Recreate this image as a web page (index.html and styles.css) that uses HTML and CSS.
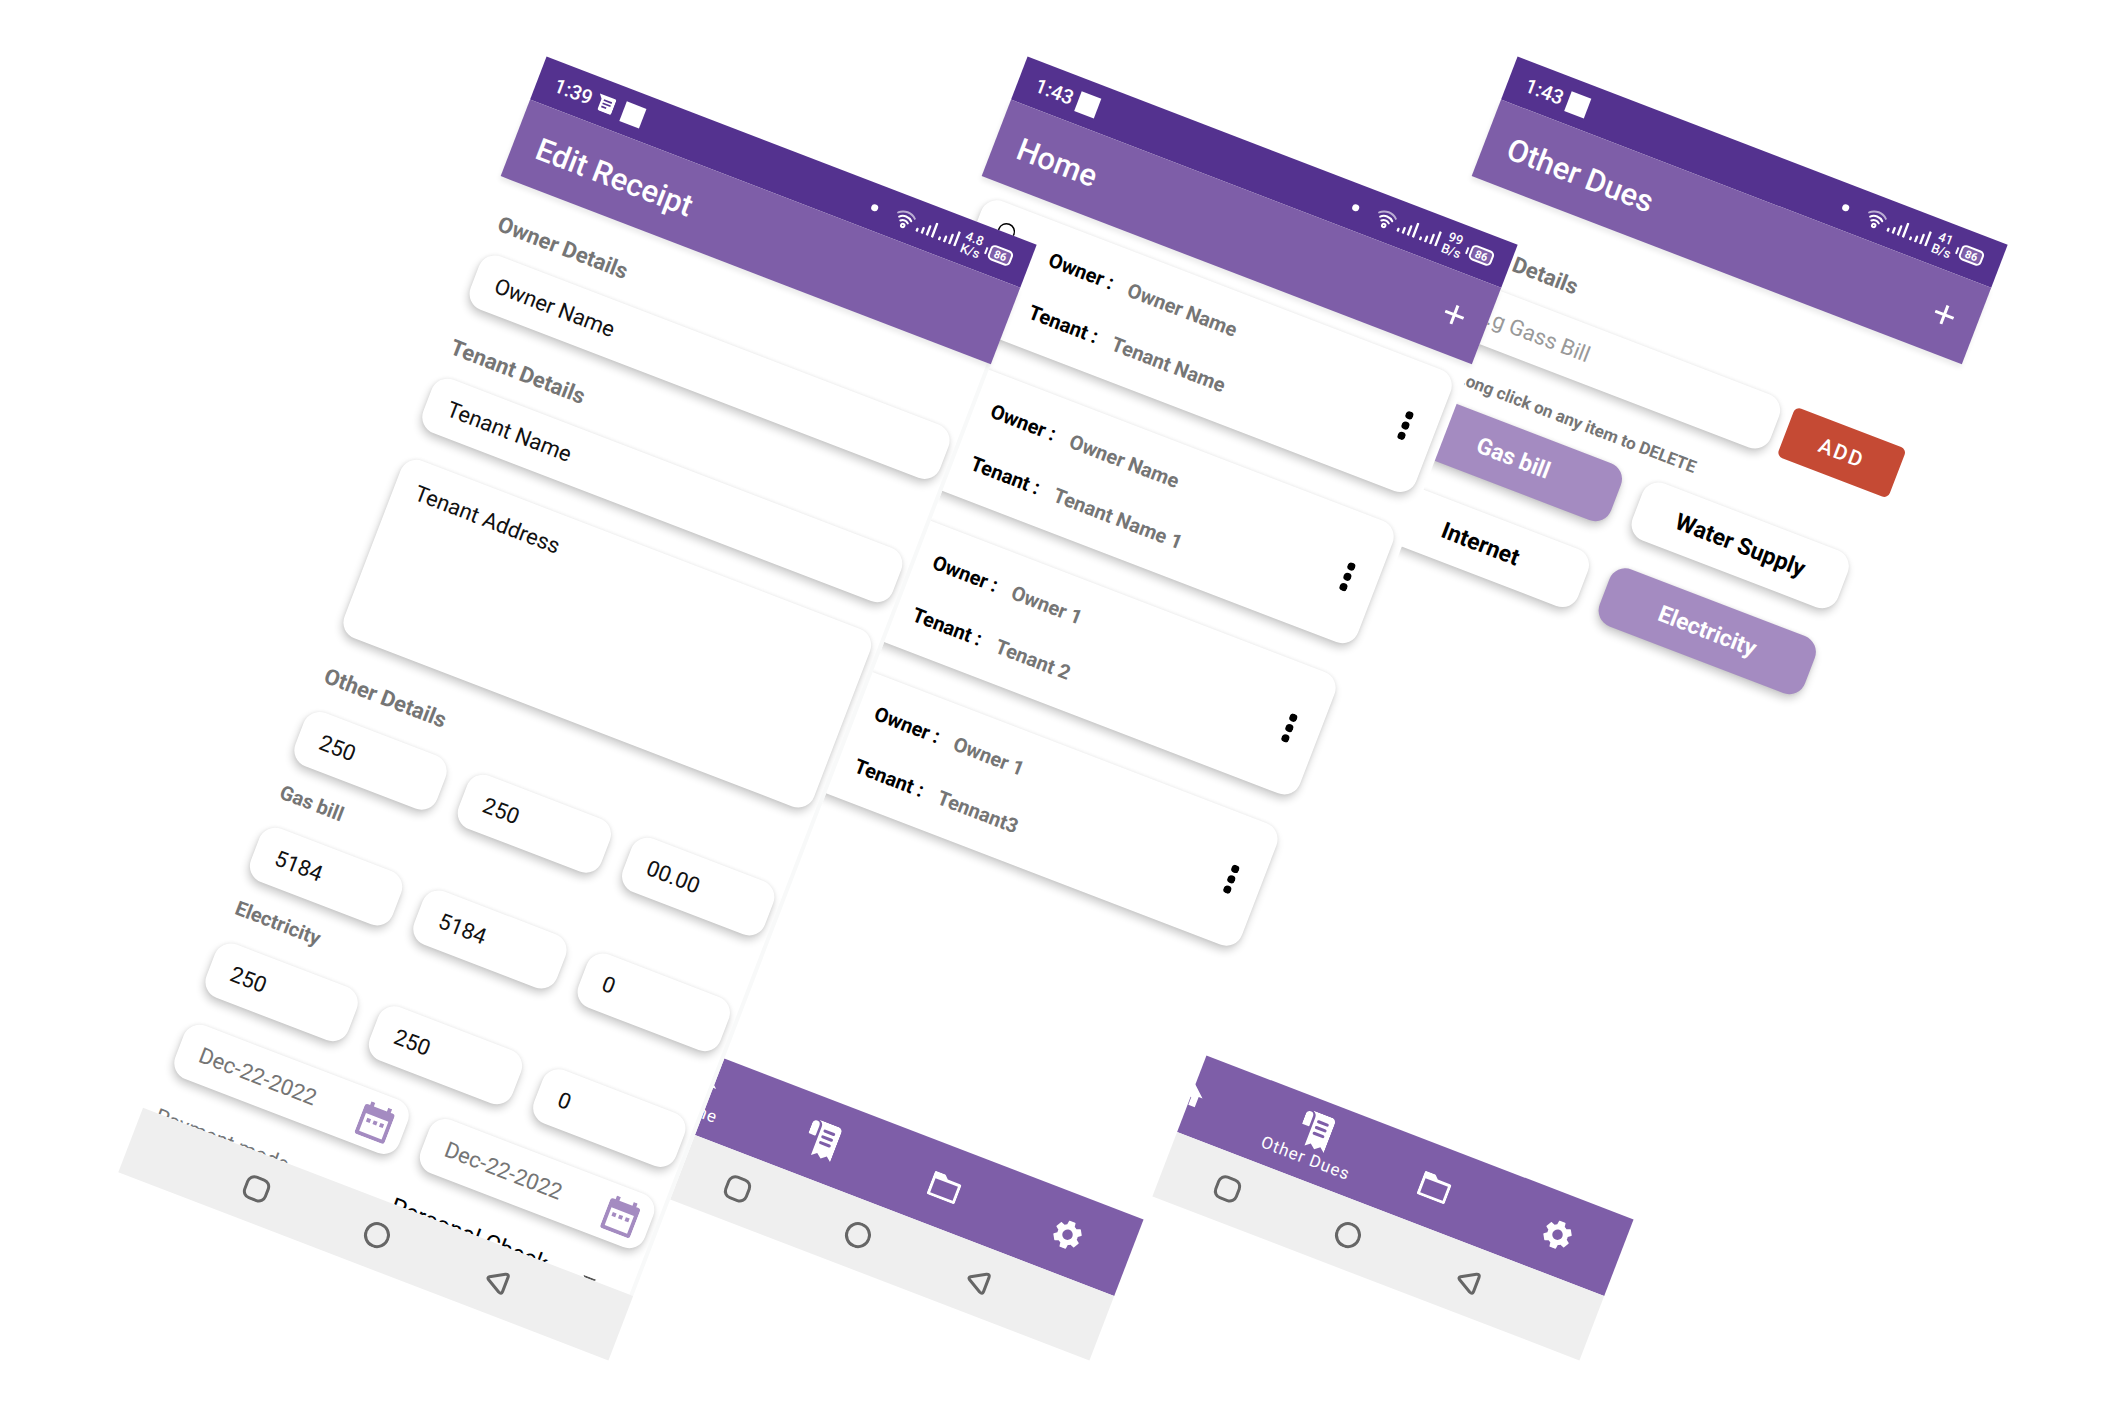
FILE: index.html
```html
<!DOCTYPE html>
<html lang="en">
<head>
  <title>Rent Receipt App</title>
  <meta charset="UTF-8">
  <meta name="viewport" content="width=device-width, initial-scale=1.0">
  <link rel="stylesheet" href="styles.css">
</head>
<body>
  <svg class="sprite" aria-hidden="true">
    <symbol id="wifi" viewBox="0 0 20 20">
      <g fill="none" stroke="#fff" stroke-width="2" stroke-linecap="round">
        <path d="M1 6.500a13 13 0 0 1 18 0" opacity=".6"/>
        <path d="M3.500 10a9.500 9.500 0 0 1 13 0"/>
        <path d="M6 13.200a6 6 0 0 1 8 0"/>
        <circle cx="10" cy="17" r="1.700"/>
      </g>
    </symbol>
    <symbol id="signal" viewBox="0 0 20 16">
      <path d="M1.500 15v-2M7 15V10M12.500 15V6M18 15V1" stroke="#fff" stroke-width="2.400" stroke-linecap="round"/>
    </symbol>
    <symbol id="plus" viewBox="0 0 20 20">
      <path d="M10 0v20M0 10h20" stroke="#fff" stroke-width="3"/>
    </symbol>
    <symbol id="calendar" viewBox="0 0 32 36">
      <path fill="#a48bc1" fill-rule="evenodd" d="M5 0h4v4h14V0h4v4h2a3 3 0 0 1 3 3v26a3 3 0 0 1-3 3H3a3 3 0 0 1-3-3V7a3 3 0 0 1 3-3h2zM4 13v19h24V13z"/>
      <path fill="#a48bc1" d="M7 17h4v4H7zM14 17h4v4h-4zM21 17h4v4h-4z"/>
    </symbol>
    <symbol id="home" viewBox="0 0 24 24">
      <path fill="#fff" d="M10 20v-6h4v6h5v-8h3L12 3 2 12h3v8z"/>
    </symbol>
    <symbol id="receipt" viewBox="0 0 30 36">
      <path fill="#fff" d="M6 0h19a5 5 0 0 1 5 5v30l-5-4-5 4-5-4-5 4V6c0-3-1-4-4-6z"/>
      <path fill="#fff" d="M0 15V5a4 4 0 0 1 6-3c1 1 1.500 2 1.500 4v9q0 1-1 1H1q-1 0-1-1z"/>
      <path d="M14.500 8.500h9M14.500 14.500h9M14.500 20.500h9" stroke="#7e5ea8" stroke-width="3" stroke-linecap="round"/>
    </symbol>
    <symbol id="folder" viewBox="0 0 30 25">
      <path fill="#fff" fill-rule="evenodd" d="M2 0h9l4 4h13a2 2 0 0 1 2 2v17a2 2 0 0 1-2 2H2a2 2 0 0 1-2-2V2a2 2 0 0 1 2-2zM3 7v15h24V7z"/>
    </symbol>
    <symbol id="gear" viewBox="2 2 20 20">
      <path fill="#fff" d="M19.140 12.940c.04-.3.06-.61.06-.94 0-.32-.02-.64-.07-.94l2.030-1.580c.18-.14.23-.41.12-.61l-1.920-3.320c-.12-.22-.37-.29-.59-.22l-2.390.96c-.5-.38-1.030-.7-1.620-.94l-.36-2.540c-.04-.24-.24-.41-.48-.41h-3.840c-.24 0-.43.17-.47.41l-.36 2.540c-.59.24-1.130.57-1.620.94l-2.390-.96c-.22-.08-.47 0-.59.22L2.740 8.870c-.12.21-.08.47.12.61l2.030 1.580c-.05.3-.09.63-.09.94s.02.64.07.94l-2.030 1.580c-.18.14-.23.41-.12.61l1.920 3.320c.12.22.37.29.59.22l2.390-.96c.5.38 1.030.7 1.620.94l.36 2.540c.05.24.24.41.48.41h3.840c.24 0 .44-.17.47-.41l.36-2.540c.59-.24 1.130-.56 1.620-.94l2.390.96c.22.08.47 0 .59-.22l1.920-3.320c.12-.22.07-.47-.12-.61l-2.010-1.580zM12 15.600c-1.980 0-3.600-1.620-3.600-3.600s1.620-3.600 3.600-3.600 3.600 1.620 3.600 3.600-1.620 3.600-3.600 3.600z"/>
    </symbol>
    <symbol id="person" viewBox="0 0 48 96">
      <g fill="none" stroke="#000" stroke-width="1.500">
        <circle cx="24" cy="10" r="8"/>
        <path d="M8 44V32q0-9 9-9h14q9 0 9 9v12z"/>
      </g>
    </symbol>
    <symbol id="more" viewBox="0 0 8 30">
      <circle cx="4" cy="4" r="4"/><circle cx="4" cy="15" r="4"/><circle cx="4" cy="26" r="4"/>
    </symbol>
    <symbol id="recents" viewBox="0 0 26 26">
      <rect x="2" y="2" width="22" height="22" rx="7" fill="none" stroke="#666" stroke-width="3"/>
    </symbol>
    <symbol id="circle" viewBox="0 0 26 26">
      <circle cx="13" cy="13" r="11.500" fill="none" stroke="#666" stroke-width="3"/>
    </symbol>
    <symbol id="back" viewBox="0 0 26 26">
      <path d="M4 11.500L18 3.500q3.500-1.500 3.500 2v15q0 3.500-3.500 2L4 14.500q-2-1.500 0-3z" fill="none" stroke="#666" stroke-width="3" stroke-linejoin="round"/>
    </symbol>
  </svg>

  <main class="showcase">

    <!-- Edit receipt -->
    <section class="phone phone-receipt">
      <div class="status-bar">
        <span class="time">1:39</span>
        <svg class="message-icon" viewBox="0 0 21 20">
          <path fill="#fff" d="M0 1h19q2 0 2 2v15q0 2-2 2H6q-2 0-2-2V6z"/>
          <path d="M7 6.500h10M7 10.500h10M7 14.500h6" stroke="#54328f" stroke-width="2"/>
        </svg>
        <span class="square"></span>
        <span class="dot"></span>
        <svg class="wifi"><use href="#wifi"/></svg>
        <svg class="signal"><use href="#signal"/></svg>
        <svg class="signal"><use href="#signal"/></svg>
        <span class="speed">4.8<br>K/s</span>
        <span class="battery">86</span>
      </div>
      <header class="app-bar">
        <h1>Edit Receipt</h1>
      </header>
      <form class="content receipt-form">
        <label class="section-label" for="owner-name">Owner Details</label>
        <input class="field" type="text" id="owner-name" value="Owner Name">
        <label class="section-label" for="tenant-name">Tenant Details</label>
        <input class="field" type="text" id="tenant-name" value="Tenant Name">
        <textarea class="field address" aria-label="Tenant address">Tenant Address</textarea>
        <label class="section-label" for="rent">Other Details</label>
        <div class="amounts">
          <input class="field" type="text" id="rent" value="250">
          <input class="field" type="text" aria-label="Rent paid" value="250">
          <input class="field" type="text" aria-label="Rent balance" value="00.00">
        </div>
        <label class="bill-label" for="gas">Gas bill</label>
        <div class="amounts">
          <input class="field" type="text" id="gas" value="5184">
          <input class="field" type="text" aria-label="Gas bill paid" value="5184">
          <input class="field" type="text" aria-label="Gas bill balance" value="0">
        </div>
        <label class="bill-label" for="electricity">Electricity</label>
        <div class="amounts">
          <input class="field" type="text" id="electricity" value="250">
          <input class="field" type="text" aria-label="Electricity paid" value="250">
          <input class="field" type="text" aria-label="Electricity balance" value="0">
        </div>
        <div class="dates">
          <button type="button" class="field date">Dec-22-2022 <svg><use href="#calendar"/></svg></button>
          <button type="button" class="field date">Dec-22-2022 <svg><use href="#calendar"/></svg></button>
        </div>
        <div class="payment">
          <label for="payment-mode">Payment mode</label>
          <div class="select">
            <select id="payment-mode"><option>Personal Check</option></select>
            <svg viewBox="0 0 14 8"><path d="M0 0h14L7 8z" fill="#555"/></svg>
          </div>
        </div>
      </form>
      <div class="system-nav">
        <button aria-label="Recents"><svg><use href="#recents"/></svg></button>
        <button aria-label="Home screen"><svg><use href="#circle"/></svg></button>
        <button aria-label="Back"><svg><use href="#back"/></svg></button>
      </div>
    </section>

    <!-- Home -->
    <section class="phone phone-home">
      <div class="status-bar">
        <span class="time">1:43</span>
        <span class="square"></span>
        <span class="dot"></span>
        <svg class="wifi"><use href="#wifi"/></svg>
        <svg class="signal"><use href="#signal"/></svg>
        <svg class="signal"><use href="#signal"/></svg>
        <span class="speed">99<br>B/s</span>
        <span class="battery">86</span>
      </div>
      <header class="app-bar">
        <h1>Home</h1>
        <button class="add-icon" aria-label="Add receipt"><svg><use href="#plus"/></svg></button>
      </header>
      <div class="content receipts">
        <article class="card">
          <svg class="person"><use href="#person"/></svg>
          <dl>
            <div><dt>Owner :</dt><dd>Owner Name</dd></div>
            <div><dt>Tenant :</dt><dd>Tenant Name</dd></div>
          </dl>
          <button class="more" aria-label="More"><svg><use href="#more"/></svg></button>
        </article>
        <article class="card">
          <svg class="person"><use href="#person"/></svg>
          <dl>
            <div><dt>Owner :</dt><dd>Owner Name</dd></div>
            <div><dt>Tenant :</dt><dd>Tenant Name 1</dd></div>
          </dl>
          <button class="more" aria-label="More"><svg><use href="#more"/></svg></button>
        </article>
        <article class="card">
          <svg class="person"><use href="#person"/></svg>
          <dl>
            <div><dt>Owner :</dt><dd>Owner 1</dd></div>
            <div><dt>Tenant :</dt><dd>Tenant 2</dd></div>
          </dl>
          <button class="more" aria-label="More"><svg><use href="#more"/></svg></button>
        </article>
        <article class="card">
          <svg class="person"><use href="#person"/></svg>
          <dl>
            <div><dt>Owner :</dt><dd>Owner 1</dd></div>
            <div><dt>Tenant :</dt><dd>Tennant3</dd></div>
          </dl>
          <button class="more" aria-label="More"><svg><use href="#more"/></svg></button>
        </article>
      </div>
      <nav class="tabs">
        <a href="#home-tab"><svg class="tab-home"><use href="#home"/></svg>Home</a>
        <a href="#dues-tab" aria-label="Other Dues"><svg class="tab-receipt"><use href="#receipt"/></svg></a>
        <a href="#files-tab" aria-label="Files"><svg class="tab-folder"><use href="#folder"/></svg></a>
        <a href="#settings-tab" aria-label="Settings"><svg class="tab-gear"><use href="#gear"/></svg></a>
      </nav>
      <div class="system-nav">
        <button aria-label="Recents"><svg><use href="#recents"/></svg></button>
        <button aria-label="Home screen"><svg><use href="#circle"/></svg></button>
        <button aria-label="Back"><svg><use href="#back"/></svg></button>
      </div>
    </section>

    <!-- Other dues -->
    <section class="phone phone-dues">
      <div class="status-bar">
        <span class="time">1:43</span>
        <span class="square"></span>
        <span class="dot"></span>
        <svg class="wifi"><use href="#wifi"/></svg>
        <svg class="signal"><use href="#signal"/></svg>
        <svg class="signal"><use href="#signal"/></svg>
        <span class="speed">41<br>B/s</span>
        <span class="battery">86</span>
      </div>
      <header class="app-bar">
        <h1>Other Dues</h1>
        <button class="add-icon" aria-label="Add due"><svg><use href="#plus"/></svg></button>
      </header>
      <div class="content dues">
        <label class="section-label" for="due-name">Dues Details</label>
        <div class="add-row">
          <input class="field" type="text" id="due-name" placeholder="e.g Gass Bill">
          <button class="add-button">ADD</button>
        </div>
        <p class="hint">Long click on any item to DELETE</p>
        <div class="chips">
          <button class="chip selected">Gas bill</button>
          <button class="chip">Water Supply</button>
          <button class="chip">Internet</button>
          <button class="chip selected">Electricity</button>
        </div>
      </div>
      <nav class="tabs">
        <a href="#home-tab" aria-label="Home"><svg class="tab-home"><use href="#home"/></svg></a>
        <a href="#dues-tab"><svg class="tab-receipt"><use href="#receipt"/></svg>Other Dues</a>
        <a href="#files-tab" aria-label="Files"><svg class="tab-folder"><use href="#folder"/></svg></a>
        <a href="#settings-tab" aria-label="Settings"><svg class="tab-gear"><use href="#gear"/></svg></a>
      </nav>
      <div class="system-nav">
        <button aria-label="Recents"><svg><use href="#recents"/></svg></button>
        <button aria-label="Home screen"><svg><use href="#circle"/></svg></button>
        <button aria-label="Back"><svg><use href="#back"/></svg></button>
      </div>
    </section>

  </main>
</body>
</html>
```

FILE: styles.css
```css
* {
  box-sizing: border-box;
}

body {
  margin: 0;
  background: #fff;
  font-family: Roboto, "Liberation Sans", sans-serif;
  color: #000;
}

h1, p, dl, dd {
  margin: 0;
}

button, input, textarea, select {
  font-family: inherit;
}

button {
  padding: 0;
  border: none;
  background: none;
  cursor: pointer;
}

svg {
  display: block;
  flex: none;
}

.sprite {
  display: none;
}

.showcase {
  display: flex;
  justify-content: center;
  align-items: center;
  min-height: 100vh;
  overflow: hidden;
}

/* phones */
.phone {
  display: flex;
  flex-direction: column;
  flex: none;
  position: relative;
  width: 525px;
  aspect-ratio: 525 / 1195;
  background: #fff;
  transform: rotate(21deg);
}

.phone-receipt {
  z-index: 3;
}

.phone-home {
  z-index: 2;
  margin-left: -44px;
}

.phone-dues {
  z-index: 1;
  margin-left: -35px;
}

.status-bar {
  display: flex;
  align-items: center;
  gap: 3px;
  flex: none;
  height: 46px;
  padding: 0 18px;
  background: #54328f;
  color: #fff;
}

.time {
  margin-right: 3px;
  font-size: 20px;
  font-weight: 500;
}

.message-icon {
  width: 18px;
  height: 18px;
  margin-right: 7px;
}

.square {
  width: 21px;
  height: 21px;
  background: #fff;
}

.dot {
  width: 7px;
  height: 7px;
  margin-left: auto;
  margin-right: 16px;
  border-radius: 50%;
  background: #fff;
}

.wifi {
  width: 20px;
  height: 20px;
}

.signal {
  width: 21px;
  height: 16px;
}

.speed {
  width: 22px;
  font-size: 13px;
  line-height: 13px;
  font-weight: 500;
  text-align: center;
}

.battery {
  display: flex;
  align-items: center;
  justify-content: center;
  width: 24px;
  height: 16px;
  margin-left: 4px;
  border: 2px solid #fff;
  border-radius: 5px;
  background: #7e5ea8;
  font-size: 11px;
  font-weight: 700;
  position: relative;
}

.battery::before {
  content: "";
  position: absolute;
  left: -6px;
  width: 2px;
  height: 7px;
  background: #fff;
}

.app-bar {
  display: flex;
  align-items: center;
  justify-content: space-between;
  flex: none;
  height: 82px;
  padding: 2px 24px 0;
  background: #7e5ea8;
  box-shadow: 0 4px 5px rgba(0, 0, 0, 0.08);
  color: #fff;
  position: relative;
}

.app-bar h1 {
  font-size: 31px;
  font-weight: 500;
}

.add-icon svg {
  width: 20px;
  height: 20px;
}

.content {
  flex: 1;
  min-height: 0;
  overflow: hidden;
}

.system-nav {
  display: flex;
  align-items: center;
  justify-content: space-around;
  flex: none;
  height: 69px;
  padding: 0 67px 0 70px;
  background: #efefef;
}

.system-nav svg {
  width: 26px;
  height: 26px;
}

.tabs {
  display: grid;
  grid-template-columns: repeat(4, 1fr);
  flex: none;
  height: 82px;
  background: #7e5ea8;
}

.tabs a {
  display: flex;
  flex-direction: column;
  align-items: center;
  justify-content: center;
  color: #fff;
  font-size: 17px;
  line-height: 20px;
  letter-spacing: 1px;
  text-decoration: none;
}

.tab-home {
  width: 33px;
  height: 33px;
}

.tab-receipt {
  width: 31px;
  height: 37px;
}

.tab-folder {
  width: 30px;
  height: 25px;
}

.tab-gear {
  width: 29px;
  height: 29px;
}

/* form fields */
.section-label, .bill-label {
  display: block;
  padding-left: 3px;
  color: #757575;
  line-height: 24px;
  font-weight: 700;
}

.section-label {
  margin: 33px 0 18px;
  font-size: 22px;
}

.bill-label {
  margin: 20px 0 22px;
  font-size: 20px;
}

.field {
  display: block;
  width: 100%;
  height: 57px;
  padding: 0 22px;
  border: none;
  border-radius: 17px;
  background: #fff;
  box-shadow: 0 5px 8px rgba(0, 0, 0, 0.2), 0 0 4px rgba(0, 0, 0, 0.08);
  color: #111;
  font-size: 22px;
  outline: none;
}

.field::placeholder {
  color: #999;
}

.receipt-form {
  padding: 0 6px 0 12px;
  border-right: 4px solid #f8f9f9;
}

.address {
  height: 190px;
  margin-top: 30px;
  padding: 18px 22px;
  line-height: 27px;
  resize: none;
}

.amounts {
  display: grid;
  grid-template-columns: repeat(3, 1fr);
  gap: 23px;
  margin-top: 23px;
}

.dates {
  display: grid;
  grid-template-columns: repeat(2, 1fr);
  gap: 23px;
  margin-top: 30px;
}

.date {
  display: flex;
  align-items: center;
  justify-content: space-between;
  padding: 0 14px 0 22px;
  color: #757575;
}

.date svg {
  width: 32px;
  height: 36px;
}

.payment {
  display: grid;
  grid-template-columns: repeat(2, 1fr);
  align-items: center;
  margin-top: 30px;
  padding-left: 3px;
  color: #757575;
  font-size: 21px;
  line-height: 28px;
}

.select {
  display: flex;
  align-items: center;
  padding: 0 30px 0 2px;
}

.select select {
  flex: 1;
  border: none;
  background: none;
  color: #000;
  font-size: 24px;
  appearance: none;
}

.select svg {
  width: 14px;
  height: 8px;
}

/* home */
.receipts {
  display: flex;
  flex-direction: column;
  gap: 32px;
  padding: 16px 10px 16px 12px;
}

.card {
  display: flex;
  align-items: center;
  flex: none;
  height: 130px;
  padding: 0 26px 0 7px;
  border-radius: 17px;
  box-shadow: 0 5px 8px rgba(0, 0, 0, 0.2), 0 0 4px rgba(0, 0, 0, 0.08);
}

.person {
  width: 48px;
  height: 96px;
}

.card dl {
  flex: 1;
  display: flex;
  flex-direction: column;
  gap: 32px;
  padding-left: 26px;
  font-size: 20px;
  line-height: 24px;
  font-weight: 700;
}

.card dl div {
  display: flex;
  gap: 16px;
}

.card dd {
  color: #757575;
}

.more svg {
  width: 8px;
  height: 30px;
}

/* other dues */
.dues {
  padding: 22px 10px 0 12px;
}

.add-row {
  display: flex;
  align-items: center;
  gap: 12px;
  padding-right: 11px;
}

.add-row .field {
  flex: 1;
  min-width: 0;
  padding-left: 42px;
}

.add-button {
  width: 119px;
  height: 53px;
  border-radius: 6px;
  background: #c54a34;
  color: #fff;
  font-size: 21px;
  font-weight: 500;
  letter-spacing: 2px;
}

.hint {
  margin-top: 26px;
  padding-left: 47px;
  color: #757575;
  font-size: 17px;
  line-height: 24px;
  font-weight: 700;
}

.chips {
  display: grid;
  grid-template-columns: repeat(2, 1fr);
  gap: 31px 23px;
  margin-top: 14px;
  padding: 0 22px 0 18px;
}

.chip {
  height: 61px;
  border-radius: 17px;
  background: #fff;
  box-shadow: 0 5px 8px rgba(0, 0, 0, 0.2), 0 0 4px rgba(0, 0, 0, 0.08);
  font-size: 23px;
  font-weight: 700;
  color: #000;
}

.chip.selected {
  background: #a48bc1;
  color: #fff;
}
```
